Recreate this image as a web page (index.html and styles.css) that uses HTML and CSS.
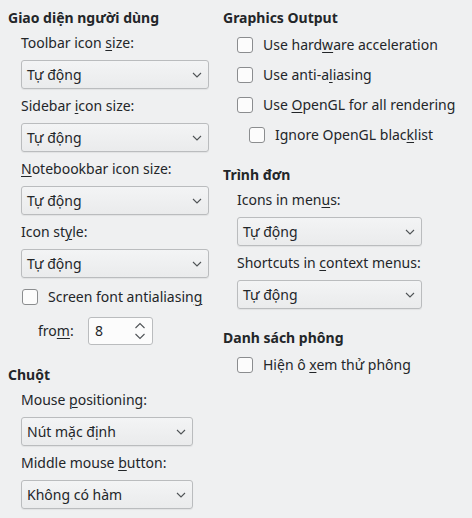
FILE: index.html
```html
<!DOCTYPE html>
<html lang="vi">
<head>
<meta charset="utf-8">
<title>Tùy chọn</title>
<link rel="stylesheet" href="styles.css">
</head>
<body>
<div class="page">
  <div class="col col-left">
    <section class="group">
      <h2 class="heading">Giao diện người dùng</h2>
      <div class="body body-left">
        <div class="field">
          <div class="label">Toolbar icon <u>s</u>ize:</div>
          <div class="combo w188"><span>Tự động</span><svg class="chev" viewBox="0 0 10 6"><path d="M1 1 L5 5 L9 1"/></svg></div>
        </div>
        <div class="field">
          <div class="label">Sidebar <u>i</u>con size:</div>
          <div class="combo w188"><span>Tự động</span><svg class="chev" viewBox="0 0 10 6"><path d="M1 1 L5 5 L9 1"/></svg></div>
        </div>
        <div class="field">
          <div class="label"><u>N</u>otebookbar icon size:</div>
          <div class="combo w188"><span>Tự động</span><svg class="chev" viewBox="0 0 10 6"><path d="M1 1 L5 5 L9 1"/></svg></div>
        </div>
        <div class="field">
          <div class="label">Icon st<u>y</u>le:</div>
          <div class="combo w188"><span>Tự động</span><svg class="chev" viewBox="0 0 10 6"><path d="M1 1 L5 5 L9 1"/></svg></div>
        </div>
        <div class="check-row aa-row"><span class="box"></span><span>Screen font antialiasin<u>g</u></span></div>
        <div class="from-row">
          <span class="from-label">fro<u>m</u>:</span>
          <div class="spin"><span>8</span>
            <svg class="spin-arrows" viewBox="0 0 12 20"><path d="M1.5 7 L6 2.5 L10.5 7"/><path d="M1.5 13 L6 17.5 L10.5 13"/></svg>
          </div>
        </div>
      </div>
    </section>
    <section class="group group-mouse">
      <h2 class="heading">Chuột</h2>
      <div class="body body-left">
        <div class="field">
          <div class="label">Mouse <u>p</u>ositioning:</div>
          <div class="combo w172"><span>Nút mặc định</span><svg class="chev" viewBox="0 0 10 6"><path d="M1 1 L5 5 L9 1"/></svg></div>
        </div>
        <div class="field">
          <div class="label">Middle mouse <u>b</u>utton:</div>
          <div class="combo w172"><span>Không có hàm</span><svg class="chev" viewBox="0 0 10 6"><path d="M1 1 L5 5 L9 1"/></svg></div>
        </div>
      </div>
    </section>
  </div>
  <div class="col col-right">
    <section class="group">
      <h2 class="heading">Graphics Output</h2>
      <div class="body body-right checks">
        <div class="check-row"><span class="box"></span><span>Use hard<u>w</u>are acceleration</span></div>
        <div class="check-row"><span class="box"></span><span>Use anti-a<u>l</u>iasing</span></div>
        <div class="check-row"><span class="box"></span><span>Use <u>O</u>penGL for all rendering</span></div>
        <div class="check-row nested"><span class="box"></span><span>Ignore OpenGL blac<u>k</u>list</span></div>
      </div>
    </section>
    <section class="group group-menu">
      <h2 class="heading">Trình đơn</h2>
      <div class="body body-right">
        <div class="field">
          <div class="label">Icons in men<u>u</u>s:</div>
          <div class="combo w185"><span>Tự động</span><svg class="chev" viewBox="0 0 10 6"><path d="M1 1 L5 5 L9 1"/></svg></div>
        </div>
        <div class="field">
          <div class="label">Shortcuts in <u>c</u>ontext menus:</div>
          <div class="combo w185"><span>Tự động</span><svg class="chev" viewBox="0 0 10 6"><path d="M1 1 L5 5 L9 1"/></svg></div>
        </div>
      </div>
    </section>
    <section class="group group-font">
      <h2 class="heading">Danh sách phông</h2>
      <div class="body body-right checks">
        <div class="check-row"><span class="box"></span><span>Hiện ô <u>x</u>em thử phông</span></div>
      </div>
    </section>
  </div>
</div>
</body>
</html>
```

FILE: styles.css
```css
* { box-sizing: border-box; }
html, body {
  margin: 0;
  padding: 0;
  background: #eff0f1;
}
body {
  font-family: "Noto Sans", "DejaVu Sans", sans-serif;
  font-size: 14px;
  line-height: 18px;
  color: #232629;
  width: 472px;
  height: 518px;
  overflow: hidden;
}
u {
  text-decoration: underline;
  text-decoration-thickness: 1px;
  text-underline-offset: 2px;
}
.page {
  display: grid;
  grid-template-columns: 215px 1fr;
  padding: 9px 0 0 8px;
}
.col {
  display: flex;
  flex-direction: column;
}
.group {
  display: flex;
  flex-direction: column;
}
.heading {
  margin: 0;
  font-size: 14px;
  font-weight: 700;
  line-height: 18px;
}
.body {
  display: flex;
  flex-direction: column;
  gap: 8px;
  margin-top: 7px;
}
.body-left { padding-left: 13px; }
.body-right { padding-left: 14px; }
.field {
  display: flex;
  flex-direction: column;
  gap: 8px;
}
.label { height: 18px; white-space: nowrap; }
.combo {
  height: 29px;
  border: 1px solid #babcbe;
  border-radius: 3px;
  background: linear-gradient(#f3f4f5, #eaebec);
  box-shadow: 0 1px 1px rgba(0,0,0,0.06);
  display: flex;
  align-items: center;
  justify-content: space-between;
  padding: 0 6px 0 5px;
  white-space: nowrap;
}
.w188 { width: 188px; }
.w185 { width: 185px; }
.w172 { width: 172px; }
.chev {
  width: 10px;
  height: 6px;
  fill: none;
  stroke: #4f5356;
  stroke-width: 1.1;
}
.check-row {
  display: flex;
  align-items: center;
  gap: 10px;
  height: 18px;
  white-space: nowrap;
}
.box {
  width: 16px;
  height: 16px;
  border: 1px solid #8b8d8f;
  border-radius: 3px;
  background: #fcfcfc;
  flex: none;
}
.aa-row { margin-top: 2px; margin-left: 1px; }
.from-row {
  display: flex;
  align-items: center;
  margin-top: 3px;
  padding-left: 17px;
}
.from-label { width: 50px; }
.spin {
  width: 65px;
  height: 28px;
  border: 1px solid #babcbe;
  border-radius: 3px;
  background: #fcfcfc;
  display: flex;
  align-items: center;
  justify-content: space-between;
  padding: 0 6px 0 6px;
}
.spin-arrows {
  width: 12px;
  height: 20px;
  fill: none;
  stroke: #4f5356;
  stroke-width: 1.1;
}
.group-mouse { margin-top: 21px; }
.checks { gap: 12px; margin-top: 9px; padding-left: 14px; }
.nested { margin-left: 12px; }
.group-menu { margin-top: 22px; }
.group-font { margin-top: 20px; }
.group-font .checks { margin-top: 9px; }
```
